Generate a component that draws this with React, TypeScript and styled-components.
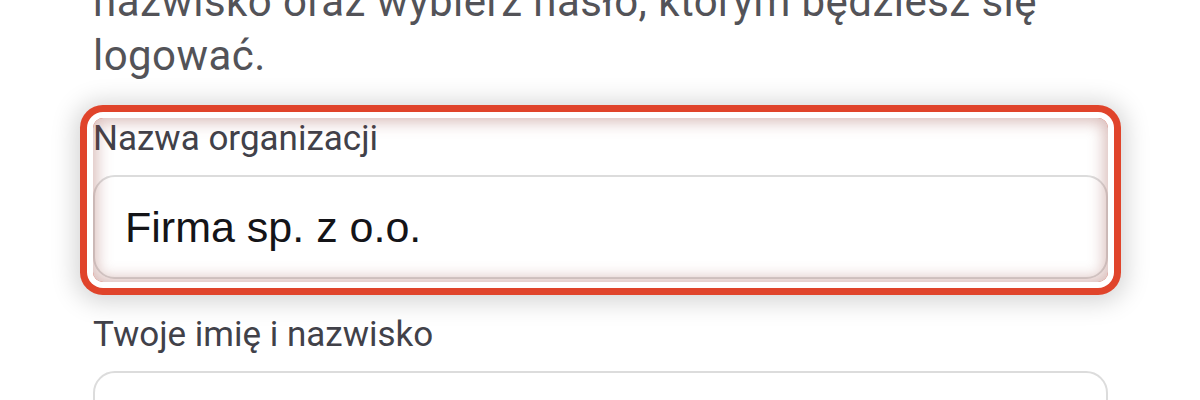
import React from "react";
import styled, { createGlobalStyle } from "styled-components";

const Global = createGlobalStyle`
  html, body {
    margin: 0;
    padding: 0;
    background: #ffffff;
    overflow: hidden;
  }
  body {
    font-family: Roboto, "Noto Sans", Arial, sans-serif;
  }
`;

const Page = styled.div`
  width: 1200px;
  height: 400px;
  overflow: hidden;
  padding: 0 92px 0 93px;
  box-sizing: border-box;
`;

const Column = styled.div`
  width: 1015px;
  display: flex;
  flex-direction: column;
  gap: 35px;
`;

const Description = styled.p`
  margin: -79px 0 0 0;
  font-family: Roboto, "Noto Sans", sans-serif;
  font-size: 42px;
  line-height: 54px;
  letter-spacing: 0.45px;
  color: #535358;
  white-space: nowrap;
`;

const Field = styled.div<{ $highlighted?: boolean }>`
  position: relative;
  display: flex;
  flex-direction: column;
  gap: 16px;
  border-radius: 10px;
  ${(p) =>
    p.$highlighted &&
    `
    padding-bottom: 3px;
    margin-bottom: -3px;
    box-shadow: 0 0 0 6px #ffffff, 0 0 0 13px #e0442b, 0 2px 24px 18px rgba(0, 0, 0, 0.17);
    &::after {
      content: "";
      position: absolute;
      inset: 0;
      border-radius: 10px;
      box-shadow: inset 0 0 15px 4px rgba(150, 70, 60, 0.36);
      pointer-events: none;
    }
  `}
`;

const Label = styled.label`
  font-family: Roboto, "Noto Sans", sans-serif;
  font-size: 35px;
  line-height: 41px;
  color: #414149;
`;

const Input = styled.div`
  height: 104px;
  box-sizing: border-box;
  border: 2px solid #dcdcdc;
  border-radius: 22px;
  background: #ffffff;
  display: flex;
  align-items: center;
  padding: 0 30px;
  font-family: Arial, "Liberation Sans", sans-serif;
  font-size: 43px;
  color: #141418;
`;

export default function App() {
  return (
    <>
      <Global />
      <Page>
        <Column>
          <Description>
            Podaj nazwę organizacji, swoje imię i
            <br />
            nazwisko oraz wybierz hasło, którym będziesz się
            <br />
            logować.
          </Description>
          <Field $highlighted>
            <Label>Nazwa organizacji</Label>
            <Input>Firma sp. z o.o.</Input>
          </Field>
          <Field>
            <Label>Twoje imię i nazwisko</Label>
            <Input />
          </Field>
        </Column>
      </Page>
    </>
  );
}
